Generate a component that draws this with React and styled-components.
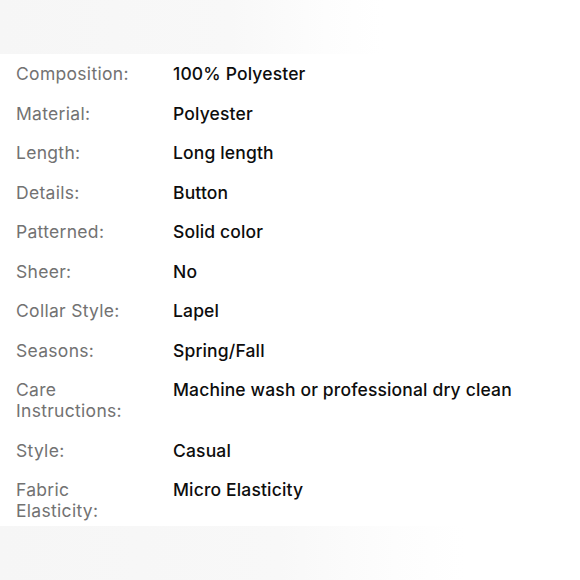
import React from 'react';
import styled, { createGlobalStyle } from 'styled-components';

const GlobalStyle = createGlobalStyle`
  html, body {
    margin: 0;
    padding: 0;
    background: #fff;
  }
`;

const Page = styled.div`
  width: 580px;
  height: 580px;
  display: flex;
  flex-direction: column;
  background: #fff;
  font-family: Inter, "Noto Sans", sans-serif;
  overflow: hidden;
`;

const Band = styled.div`
  height: ${({ size }) => size}px;
  flex: none;
  background: ${({ fade }) => `linear-gradient(90deg, #f6f6f6 0%, #f8f8f8 ${fade * 0.6}%, #fdfdfd ${fade * 0.85}%, #fff ${fade}%)`};
`;

const Specs = styled.dl`
  margin: 0;
  padding: 9px 16px 5px;
  display: grid;
  grid-template-columns: 157px 1fr;
  row-gap: 18.5px;
  font-size: 17.5px;
  line-height: 21px;
`;

const Label = styled.dt`
  margin: 0;
  color: #727272;
  max-width: 135px;
  letter-spacing: 0.3px;
`;

const Value = styled.dd`
  margin: 0;
  color: #0d0d0d;
  font-weight: 500;
  letter-spacing: 0.15px;
`;

const specs = [
  ['Composition:', '100% Polyester'],
  ['Material:', 'Polyester'],
  ['Length:', 'Long length'],
  ['Details:', 'Button'],
  ['Patterned:', 'Solid color'],
  ['Sheer:', 'No'],
  ['Collar Style:', 'Lapel'],
  ['Seasons:', 'Spring/Fall'],
  ['Care Instructions:', 'Machine wash or professional dry clean'],
  ['Style:', 'Casual'],
  ['Fabric Elasticity:', 'Micro Elasticity'],
];

export default function App() {
  return (
    <Page>
      <GlobalStyle />
      <Band size={54} fade={66} />
      <Specs>
        {specs.map(([label, value]) => (
          <React.Fragment key={label}>
            <Label>{label}</Label>
            <Value>{value}</Value>
          </React.Fragment>
        ))}
      </Specs>
      <Band size={56} fade={80} />
    </Page>
  );
}
